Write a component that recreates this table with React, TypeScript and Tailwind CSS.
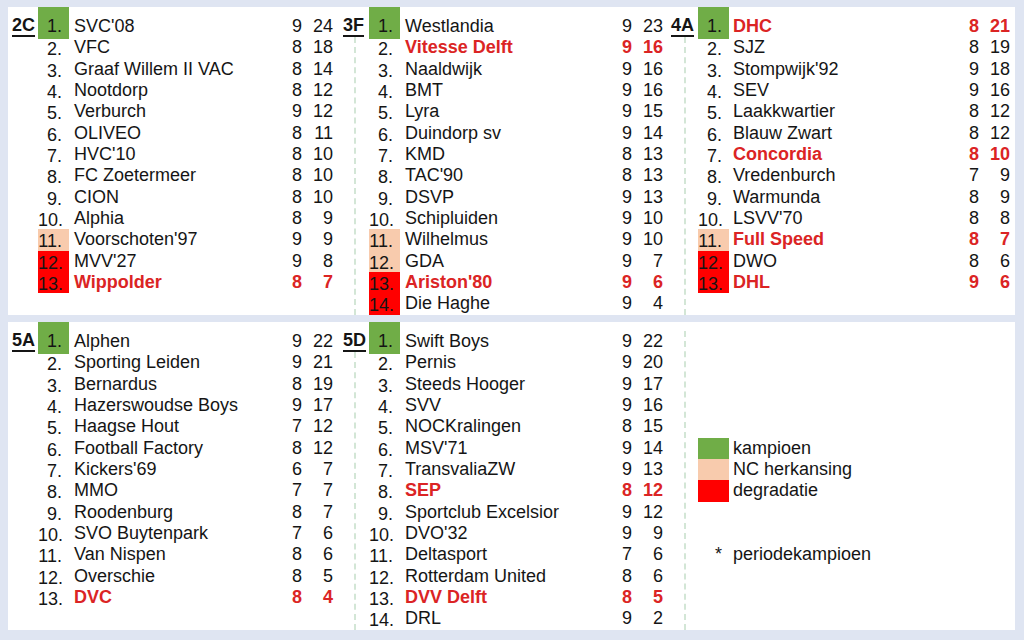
import React from 'react';

type Row = [string, number, number, string?, boolean?];

const cellBg: Record<string, string> = {
  g: 'bg-[#70ad47]',
  p: 'bg-[#f8cbad]',
  r: 'bg-[#ff0000]',
};

const layouts = [
  {
    wrap: 'w-[346px]',
    first: 'pl-[30px] pr-[21px]',
    rest: 'pl-[30px] pr-[21px]',
    restWrap: '',
    label: '-ml-[26px] w-[26px]',
    name: 'pl-[5px]',
  },
  {
    wrap: 'w-[330px]',
    first: 'pl-[15px] pr-[21px]',
    rest: 'pl-[13px] pr-[21px]',
    restWrap: 'border-l-2 border-dashed border-[#d3e6d6]',
    label: '-ml-[26px] w-[26px]',
    name: 'pl-[5px]',
  },
  {
    wrap: 'w-[331px]',
    first: 'pl-[14px] pr-[5px]',
    rest: 'pl-[12px] pr-[5px]',
    restWrap: 'border-l-2 border-dashed border-[#d3e6d6]',
    label: '-ml-[27px] w-[27px]',
    name: 'pl-[4px]',
  },
];

const c2: Row[] = [
  ["SVC'08", 9, 24, 'g'],
  ['VFC', 8, 18],
  ['Graaf Willem II VAC', 8, 14],
  ['Nootdorp', 8, 12],
  ['Verburch', 9, 12],
  ['OLIVEO', 8, 11],
  ["HVC'10", 8, 10],
  ['FC Zoetermeer', 8, 10],
  ['CION', 8, 10],
  ['Alphia', 8, 9],
  ["Voorschoten'97", 9, 9, 'p'],
  ["MVV'27", 9, 8, 'r'],
  ['Wippolder', 8, 7, 'r', true],
];

const f3: Row[] = [
  ['Westlandia', 9, 23, 'g'],
  ['Vitesse Delft', 9, 16, '', true],
  ['Naaldwijk', 9, 16],
  ['BMT', 9, 16],
  ['Lyra', 9, 15],
  ['Duindorp sv', 9, 14],
  ['KMD', 8, 13],
  ["TAC'90", 8, 13],
  ['DSVP', 9, 13],
  ['Schipluiden', 9, 10],
  ['Wilhelmus', 9, 10, 'p'],
  ['GDA', 9, 7, 'p'],
  ["Ariston'80", 9, 6, 'r', true],
  ['Die Haghe', 9, 4, 'r'],
];

const a4: Row[] = [
  ['DHC', 8, 21, 'g', true],
  ['SJZ', 8, 19],
  ["Stompwijk'92", 9, 18],
  ['SEV', 9, 16],
  ['Laakkwartier', 8, 12],
  ['Blauw Zwart', 8, 12],
  ['Concordia', 8, 10, '', true],
  ['Vredenburch', 7, 9],
  ['Warmunda', 8, 9],
  ["LSVV'70", 8, 8],
  ['Full Speed', 8, 7, 'p', true],
  ['DWO', 8, 6, 'r'],
  ['DHL', 9, 6, 'r', true],
];

const a5: Row[] = [
  ['Alphen', 9, 22, 'g'],
  ['Sporting Leiden', 9, 21],
  ['Bernardus', 8, 19],
  ['Hazerswoudse Boys', 9, 17],
  ['Haagse Hout', 7, 12],
  ['Football Factory', 8, 12],
  ["Kickers'69", 6, 7],
  ['MMO', 7, 7],
  ['Roodenburg', 8, 7],
  ['SVO Buytenpark', 7, 6],
  ['Van Nispen', 8, 6],
  ['Overschie', 8, 5],
  ['DVC', 8, 4, '', true],
];

const d5: Row[] = [
  ['Swift Boys', 9, 22, 'g'],
  ['Pernis', 9, 20],
  ['Steeds Hooger', 9, 17],
  ['SVV', 9, 16],
  ['NOCKralingen', 8, 15],
  ["MSV'71", 9, 14],
  ['TransvaliaZW', 9, 13],
  ['SEP', 8, 12, '', true],
  ['Sportclub Excelsior', 9, 12],
  ["DVO'32", 9, 9],
  ['Deltasport', 7, 6],
  ['Rotterdam United', 8, 6],
  ['DVV Delft', 8, 5, '', true],
  ['DRL', 9, 2],
];

function Stats({ row, name }: { row: Row; name: string }) {
  const hot = row[4];
  const tone = hot ? 'font-bold text-[#db2424]' : '';
  return (
    <>
      <div className={`flex-1 whitespace-nowrap ${name} ${tone}`}>{row[0]}</div>
      <div className={`text-right ${tone}`}>{row[1]}</div>
      <div className={`w-[31px] text-right ${tone}`}>{row[2]}</div>
    </>
  );
}

function Standing({ label, rows, col }: { label: string; rows: Row[]; col: number }) {
  const L = layouts[col];
  const [top, ...rest] = rows;
  return (
    <div className={`flex flex-col ${L.wrap}`}>
      <div className={`flex h-[21.35px] ${L.first}`}>
        <div className={`${L.label} font-bold underline decoration-[1.5px] underline-offset-[4px] -translate-y-[1px]`}>
          {label}
        </div>
        <div className={`w-[31px] h-[32px] -mt-[9px] pt-[9px] pr-[7px] text-right ${cellBg[top[3] || 'g']}`}>1.</div>
        <Stats row={top} name={L.name} />
      </div>
      <div className={`flex-1 ${L.restWrap}`}>
        {rest.map((r, i) => (
          <div key={r[0]} className={`flex h-[21.35px] ${L.rest}`}>
            <div className={`w-[31px] pr-[7px] text-right ${r[3] ? cellBg[r[3]] : ''}`}>
              <span className="inline-block translate-y-[2px]">{i + 2}.</span>
            </div>
            <Stats row={r} name={L.name} />
          </div>
        ))}
      </div>
    </div>
  );
}

function Legend() {
  const items: [string, string][] = [
    ['bg-[#70ad47]', 'kampioen'],
    ['bg-[#f8cbad]', 'NC herkansing'],
    ['bg-[#ff0000]', 'degradatie'],
  ];
  return (
    <div className="flex w-[331px] flex-col border-l-2 border-dashed border-[#d3e6d6] pl-[12px]">
      <div className="h-[106.75px]" />
      {items.map(([bg, t]) => (
        <div key={t} className="flex h-[21.35px]">
          <div className={`w-[31px] ${bg}`} />
          <div className="pl-[4px]">{t}</div>
        </div>
      ))}
      <div className="h-[42.7px]" />
      <div className="flex h-[21.35px]">
        <div className="w-[31px] pr-[7px] text-right">*</div>
        <div className="pl-[4px]">periodekampioen</div>
      </div>
    </div>
  );
}

export default function App() {
  return (
    <div className="flex h-[640px] w-[1024px] flex-col gap-[7px] bg-[#dfe5f2] pt-[7px] pb-[10px] pl-[8px] pr-[9px] font-['Liberation_Sans',Arial,sans-serif] text-[18px] leading-[21.4px] text-[#151515]">
      <div className="flex h-[308px] bg-white pt-[9px]">
        <Standing label="2C" rows={c2} col={0} />
        <Standing label="3F" rows={f3} col={1} />
        <Standing label="4A" rows={a4} col={2} />
      </div>
      <div className="flex h-[308px] bg-white pt-[9px]">
        <Standing label="5A" rows={a5} col={0} />
        <Standing label="5D" rows={d5} col={1} />
        <Legend />
      </div>
    </div>
  );
}
